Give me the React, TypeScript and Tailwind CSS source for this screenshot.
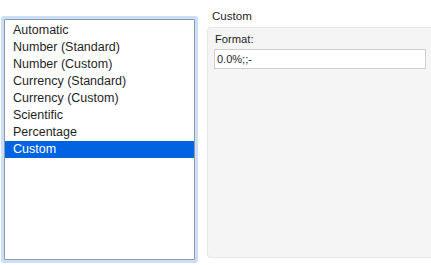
import React from 'react'

const formats = [
  'Automatic',
  'Number (Standard)',
  'Number (Custom)',
  'Currency (Standard)',
  'Currency (Custom)',
  'Scientific',
  'Percentage',
  'Custom',
]

export default function App() {
  const selected = 'Custom'

  return (
    <div
      className="w-[431px] h-[265px] overflow-hidden bg-white flex text-[#1f1f1f]"
      style={{ fontFamily: '"Liberation Sans", Arial, sans-serif' }}
    >
      {/* Format list */}
      <div className="pl-[4px] pt-[19px]">
        <div className="w-[191px] h-[241px] border border-[#8d99ab] bg-white rounded-[1px] shadow-[0_0_0_3px_#cbdef8] pt-[2px]">
          {formats.map((f) => {
            const isActive = f === selected
            return (
              <div
                key={f}
                className={`h-[17px] leading-[17px] pl-[8px] text-[12.5px] ${
                  isActive ? 'bg-[#0063e1] text-white' : ''
                }`}
              >
                {f}
              </div>
            )
          })}
        </div>
      </div>

      {/* Detail */}
      <div className="ml-[12px] flex flex-col">
        <div className="h-[27px] pl-[5px] pt-[9px] text-[11.6px] leading-[14px]">{selected}</div>
        <div className="w-[240px] h-[231px] bg-[#f5f5f5] border border-[#e6e6e6] rounded-[4px] pl-[6px] pt-[4px]">
          <div className="text-[11.2px] leading-[14px] pl-[1px]">Format:</div>
          <div className="mt-[3px] w-[212px] h-[20px] bg-white border border-[#cfcfcf] pl-[2px] text-[11px] leading-[18px]">
            0.0%;;-
          </div>
        </div>
      </div>
    </div>
  )
}
